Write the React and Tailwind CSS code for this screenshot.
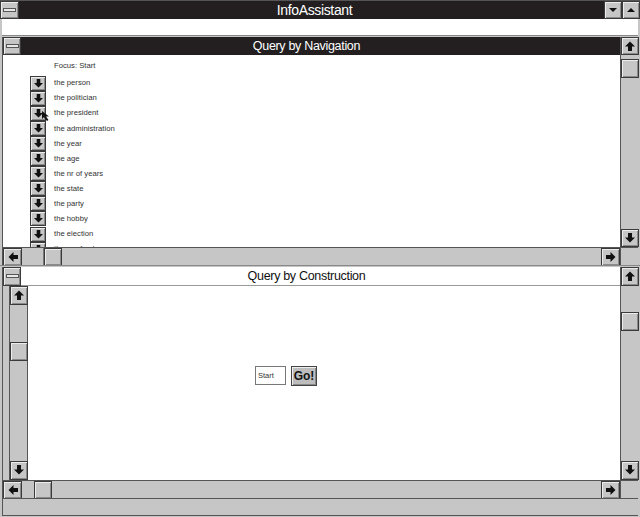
import React from "react";

const G = "bg-[#c6c6c6]";

function Arrow({ dir = "up", size = 10 }) {
  const rot = { up: 0, right: 90, down: 180, left: 270 }[dir];
  return (
    <svg width={size} height={size} viewBox="0 0 10 10" style={{ transform: `rotate(${rot}deg)` }}>
      <polygon points="5,0.5 10,5.5 7,5.5 7,10 3,10 3,5.5 0,5.5" fill="#111" />
    </svg>
  );
}

function Tri({ dir }) {
  return (
    <svg width="8" height="6" viewBox="0 0 8 6">
      {dir === "down" ? <polygon points="0,1 8,1 4,5" fill="#111" /> : <polygon points="0,5 8,5 4,1" fill="#111" />}
    </svg>
  );
}

function Btn({ className = "", children }) {
  return (
    <div
      className={`${G} border border-[#3a3a3a] shadow-[inset_1px_1px_0_#ececec,inset_-1px_-1px_0_#8a8a8a] flex items-center justify-center shrink-0 ${className}`}
    >
      {children}
    </div>
  );
}

function MenuBox({ className = "" }) {
  return (
    <Btn className={className}>
      <div className="w-[13px] h-[4px] bg-[#e8e8e8] border border-[#555]" />
    </Btn>
  );
}

const items = [
  "the person",
  "the politician",
  "the president",
  "the administration",
  "the year",
  "the age",
  "the nr of years",
  "the state",
  "the party",
  "the hobby",
  "the election",
  "the nr of votes",
];

function Cursor() {
  return (
    <svg className="absolute left-[39px] top-[56px]" width="10" height="11" viewBox="0 0 10 11">
      <polygon points="0,0 0,8 2,6 5,10 6.5,9 4,5.5 7,5.5" fill="#111" />
    </svg>
  );
}

export default function App() {
  const font = { fontFamily: '"Liberation Sans", Arial, sans-serif' };
  return (
    <div className={`w-[640px] h-[517px] ${G} flex flex-col overflow-hidden`} style={font}>
      {/* Title bar */}
      <div className="h-[19px] flex border-t border-[#555]">
        <MenuBox className="w-[19px] h-[18px]" />
        <div className="flex-1 bg-[#231f20] flex items-center justify-center text-white text-[14px] tracking-tight pl-[6px]">
          InfoAssistant
        </div>
        <Btn className="w-[18px] h-[18px]">
          <Tri dir="down" />
        </Btn>
        <Btn className="w-[18px] h-[18px]">
          <Tri dir="up" />
        </Btn>
      </div>
      {/* Menu bar */}
      <div className="h-[17px] bg-white mx-[2px] border-b border-[#888]" />
      <div className="h-[1px]" />

      {/* Upper pane */}
      <div className="flex-1 flex flex-col mx-[2px] border-l border-[#555]">
        <div className="h-[210px] flex">
          <div className="flex-1 flex flex-col">
            <div className="h-[18px] flex bg-[#231f20]">
              <MenuBox className="w-[18px] h-[18px]" />
              <div className="flex-1 flex items-center justify-center text-white text-[12.5px] tracking-tight pr-[28px] pt-[1px]">
                Query by Navigation
              </div>
            </div>
            <div className="flex-1 bg-white relative overflow-hidden text-[7.7px] text-[#333]">
              <div className="pl-[51px] pt-[5px] h-[21px]">Focus: Start</div>
              <div className="flex flex-col">
                {items.map((t) => (
                  <div key={t} className="flex items-center h-[15.1px]">
                    <Btn className="ml-[27px] w-[16px] h-[15px]">
                      <Arrow dir="down" size={9} />
                    </Btn>
                    <span className="ml-[8px]">{t}</span>
                  </div>
                ))}
              </div>
              <Cursor />
            </div>
          </div>
          <div className="w-[18px] flex flex-col border-l border-[#555]">
            <Btn className="w-[18px] h-[18px]">
              <Arrow dir="up" />
            </Btn>
            <div className="h-[4px]" />
            <Btn className="w-[18px] h-[19px]" />
            <div className="flex-1" />
            <Btn className="w-[18px] h-[18px]">
              <Arrow dir="down" />
            </Btn>
          </div>
        </div>
        {/* H scroll */}
        <div className="h-[18px] flex border-t border-[#555]">
          <Btn className="w-[19px] h-[18px]">
            <Arrow dir="left" />
          </Btn>
          <div className="w-[22px] border-r border-[#777]" />
          <Btn className="w-[18px] h-[18px]" />
          <div className="flex-1" />
          <Btn className="w-[19px] h-[18px]">
            <Arrow dir="right" />
          </Btn>
          <div className="w-[18px] border-l border-[#555]" />
        </div>
      </div>

      <div className="h-[2px] border-t border-[#888]" />

      {/* Lower pane */}
      <div className="h-[231px] flex flex-col mx-[2px] border-l border-[#555]">
        <div className="flex h-[213px]">
          <div className="flex-1 flex flex-col">
            <div className="h-[19px] flex bg-white border-b border-[#999]">
              <MenuBox className="w-[18px] h-[19px]" />
              <div className="flex-1 flex items-center justify-center text-[#111] text-[12.5px] tracking-tight pr-[28px] pt-[1px]">
                Query by Construction
              </div>
            </div>
            <div className="flex-1 flex">
              <div className="w-[6px]" />
              <div className="w-[19px] flex flex-col border-x border-[#555]">
                <Btn className="w-[18px] h-[19px]">
                  <Arrow dir="up" />
                </Btn>
                <div className="h-[37px]" />
                <Btn className="w-[18px] h-[19px]" />
                <div className="flex-1" />
                <Btn className="w-[18px] h-[19px]">
                  <Arrow dir="down" />
                </Btn>
              </div>
              <div className="flex-1 bg-white pl-[227px] pt-[80px]">
                <div className="flex items-start gap-[5px]">
                  <div className="w-[31px] h-[19px] border border-[#777] text-[7.5px] text-[#333] pl-[2px] pt-[5px] leading-none">
                    Start
                  </div>
                  <div className="w-[26px] h-[20px] bg-[#bdbdbd] border border-[#444] shadow-[inset_1px_1px_0_#eee,inset_-1px_-1px_0_#888] flex items-center justify-center text-[12px] font-bold text-[#111]">
                    Go!
                  </div>
                </div>
              </div>
            </div>
          </div>
          <div className="w-[18px] flex flex-col border-l border-[#555]">
            <Btn className="w-[18px] h-[19px]">
              <Arrow dir="up" />
            </Btn>
            <div className="h-[26px]" />
            <Btn className="w-[18px] h-[19px]" />
            <div className="flex-1" />
            <Btn className="w-[18px] h-[19px]">
              <Arrow dir="down" />
            </Btn>
          </div>
        </div>
        <div className="h-[18px] flex border-t border-[#555]">
          <Btn className="w-[19px] h-[18px]">
            <Arrow dir="left" />
          </Btn>
          <div className="w-[12px]" />
          <Btn className="w-[18px] h-[18px]" />
          <div className="flex-1" />
          <Btn className="w-[19px] h-[18px]">
            <Arrow dir="right" />
          </Btn>
          <div className="w-[18px] border-l border-[#555]" />
        </div>
      </div>
      {/* status bar */}
      <div className="h-[19px] mx-[2px] border-t border-[#555] border-b border-b-[#555] border-l border-[#555]" />
      <div className="h-[1px]" />
    </div>
  );
}
